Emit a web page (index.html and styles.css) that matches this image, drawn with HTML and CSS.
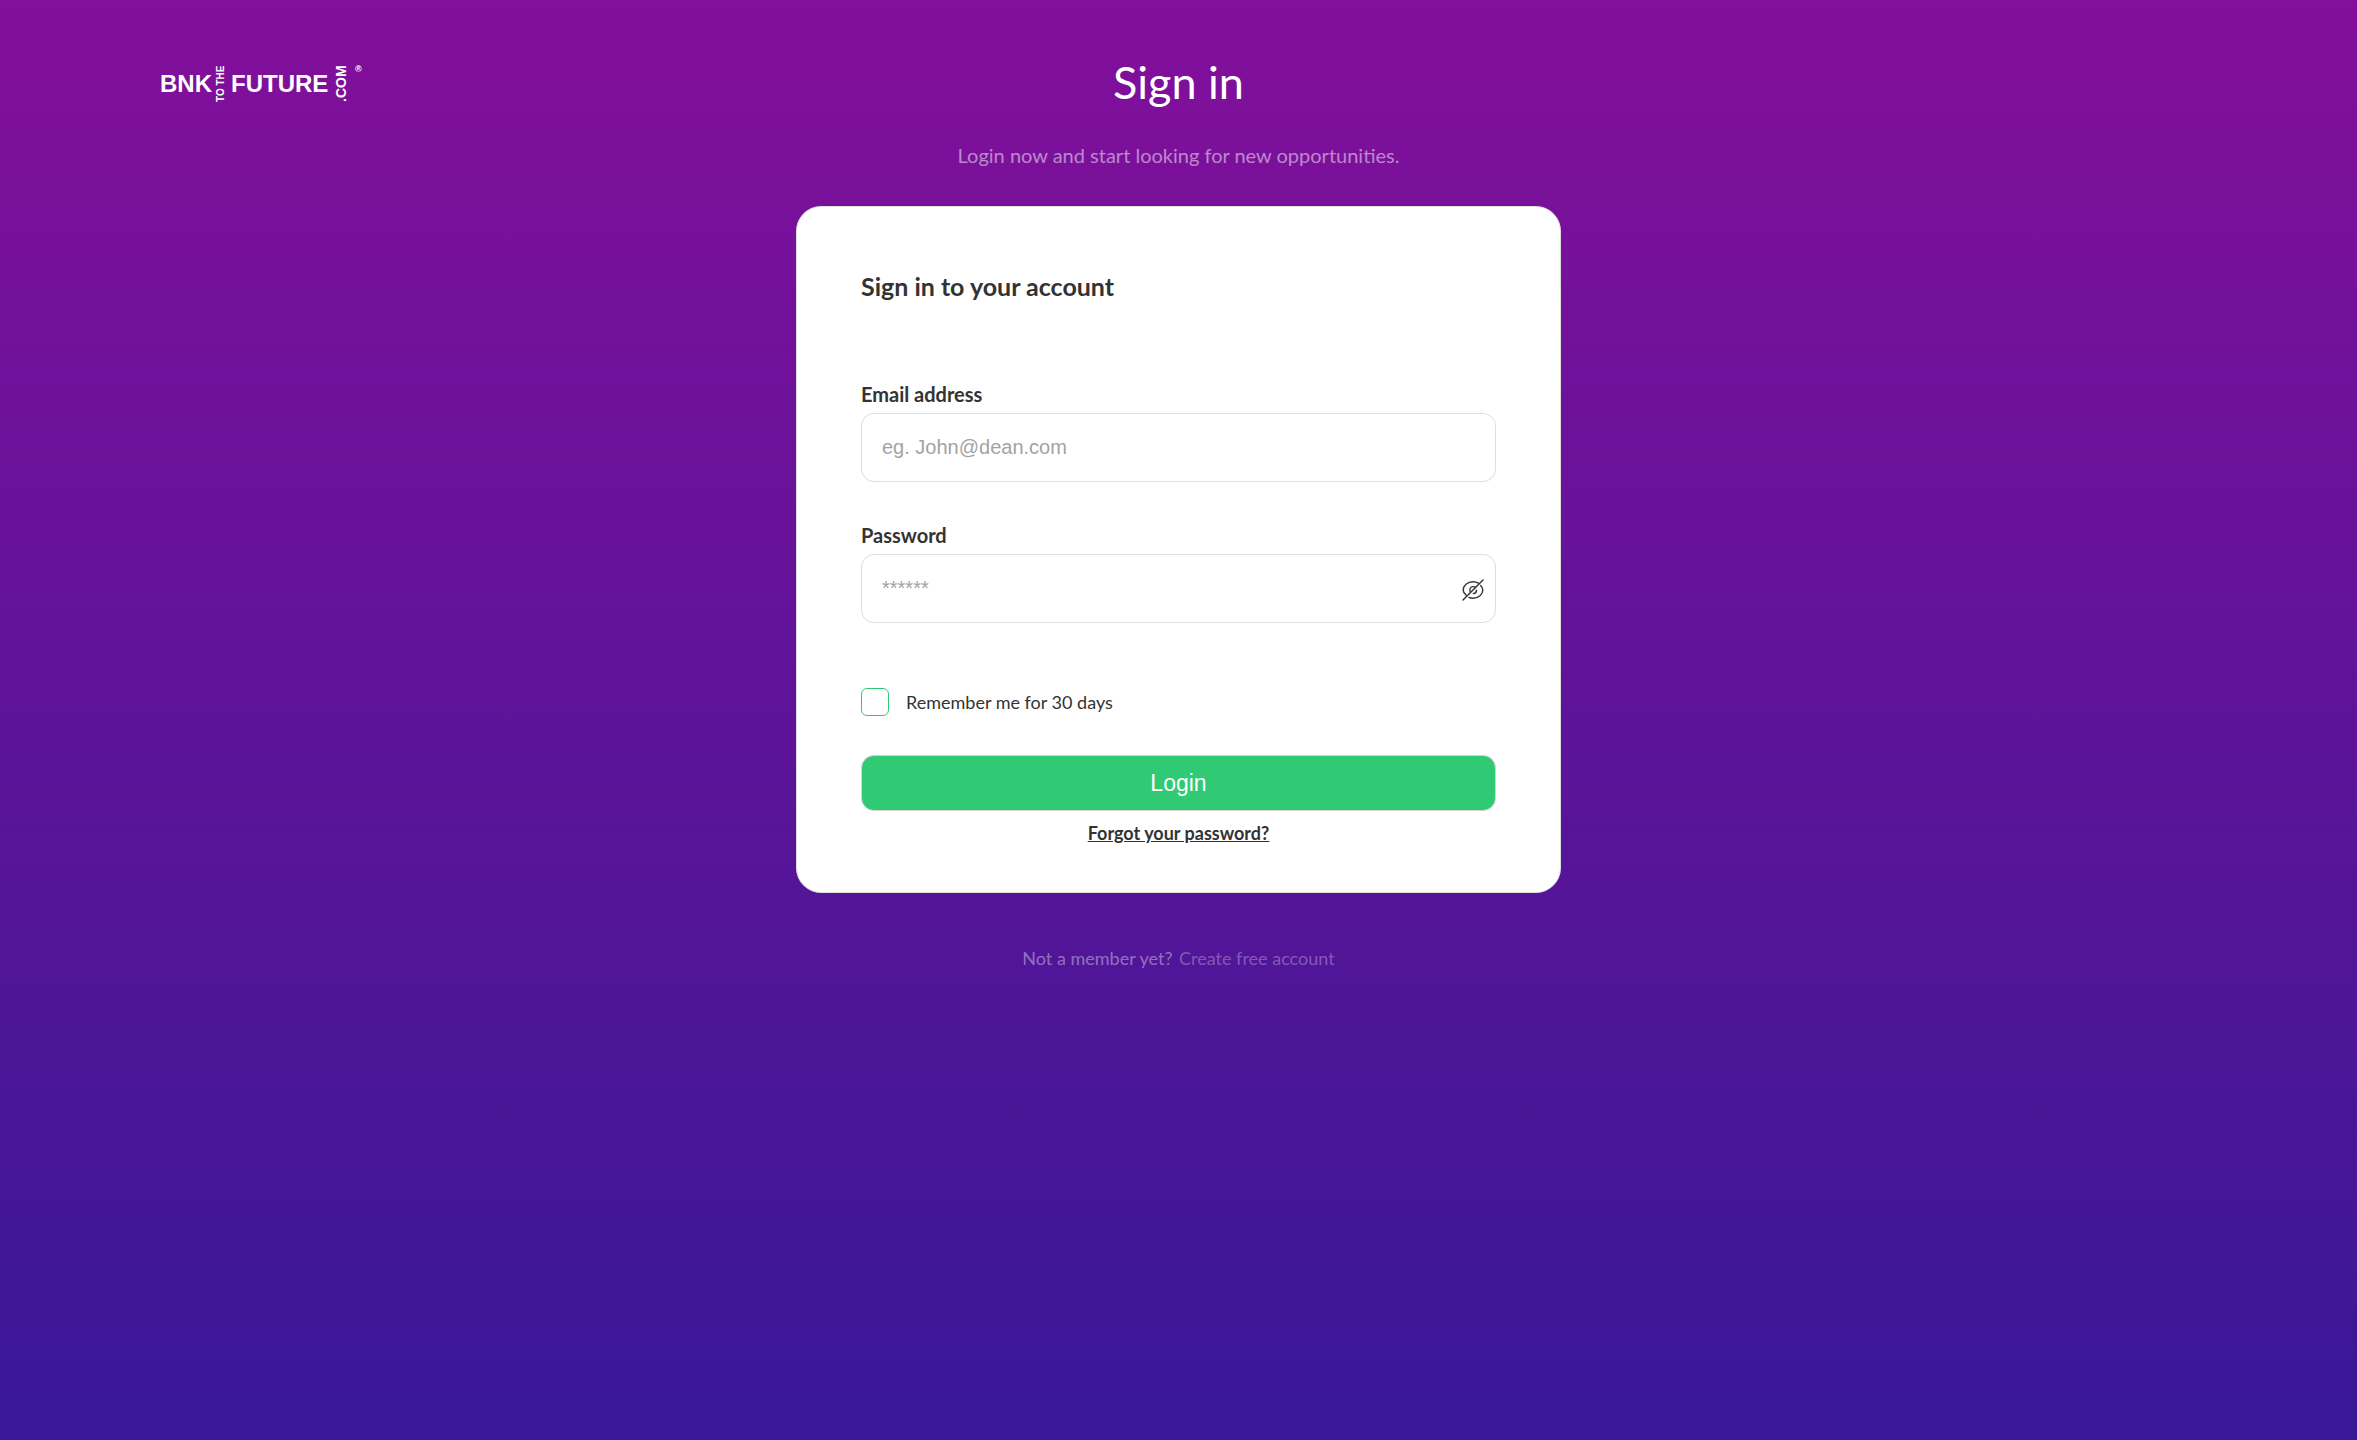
FILE: index.html
```html
<!DOCTYPE html>
<html lang="en">
<head>
<meta charset="utf-8">
<meta name="viewport" content="width=device-width, initial-scale=1">
<title>Sign in</title>
<link rel="stylesheet" href="styles.css">
</head>
<body>
<header class="header">
  <a class="logo" href="#" aria-label="BNK to the Future">
    <svg class="logo-art" viewBox="0 0 206 44" width="206" height="44">
      <text class="logo-main" x="0" y="31">BNK</text>
      <text class="logo-side" transform="translate(64 41) rotate(-90)">TO THE</text>
      <text class="logo-main" x="71" y="31">FUTURE</text>
      <text class="logo-com" transform="translate(186 41) rotate(-90)">.COM</text>
      <text class="logo-mark" x="195" y="11">®</text>
    </svg>
  </a>
  <div class="intro">
    <h1 class="title">Sign in</h1>
    <p class="subtitle">Login now and start looking for new opportunities.</p>
  </div>
</header>
<main class="main">
  <form class="card">
    <h2 class="card-title">Sign in to your account</h2>
    <div class="field">
      <label class="label" for="email">Email address</label>
      <input class="input" id="email" type="email" placeholder="eg. John@dean.com">
    </div>
    <div class="field">
      <label class="label" for="password">Password</label>
      <div class="password">
        <input class="input input-password" id="password" type="password" placeholder="******">
        <button class="toggle" type="button" aria-label="Show password">
          <svg viewBox="0 0 22 22" width="22" height="22" fill="none" stroke="#333" stroke-width="1.4" stroke-linecap="round">
            <path d="M1 21 21 1"/>
            <path d="M4.2 16.3C2.300 14.8 1.200 12.800 1.200 11c0-4.200 4.200-8.200 9.800-8.200 2 0 3.900.5 5.400 1.400"/>
            <path d="M18.600 6.500C20 7.800 20.800 9.500 20.800 11c0 4.200-4.200 8.200-9.800 8.200-1.500 0-2.900-.3-4.100-.8"/>
            <path d="M8.300 13.300C7 10.700 8.300 7.600 11 7.600c1 0 1.800.3 2.400.8"/>
            <path d="M14.500 11.200c0 1.900-1.300 3.200-3.100 3.300"/>
          </svg>
        </button>
      </div>
    </div>
    <label class="remember"><input class="check" type="checkbox">Remember me for 30 days</label>
    <button class="login" type="submit">Login</button>
    <a class="forgot" href="#">Forgot your password?</a>
  </form>
  <p class="join">Not a member yet? <a class="join-link" href="#">Create free account</a></p>
</main>
</body>
</html>
```
FILE: styles.css
```css
* { box-sizing: border-box; }
body {
  margin: 0;
  min-height: 100vh;
  background: linear-gradient(#830f9b, #381897);
  color: #333;
  font-family: Lato, sans-serif;
  font-size: 18px;
  line-height: 24px;
}
h1, h2, p { margin: 0; }
.header {
  display: grid;
  grid-template-columns: 1fr auto 1fr;
  padding: 55px 160px 39px;
}
.logo { padding-top: 6px; }
.logo-art { display: block; fill: #fff; font-family: "Liberation Sans", Arial, sans-serif; font-weight: 700; }
.logo-main { font-size: 24px; }
.logo-side { font-size: 10px; }
.logo-com { font-size: 14px; }
.logo-mark { font-size: 9px; }
.intro { text-align: center; color: #fff; }
.title { font-size: 45px; font-weight: 400; line-height: 54px; }
.subtitle { margin-top: 34px; font-size: 20px; color: rgba(255, 255, 255, .5); }
.main { display: flex; flex-direction: column; align-items: center; padding: 0 20px 40px; }
.card {
  display: flex;
  flex-direction: column;
  width: 100%;
  max-width: 765px;
  padding: 63px 64px 47px;
  border: 1px solid #ddd;
  border-radius: 25px;
  background: #fff;
}
.card-title { margin-bottom: 79px; font-size: 25px; font-weight: 700; line-height: 32px; }
.field { margin-bottom: 40px; }
.label { display: block; margin-bottom: 6px; font-size: 20px; font-weight: 700; line-height: 26px; }
.input {
  display: block;
  width: 100%;
  height: 69px;
  padding: 0 20px;
  border: 1px solid #ddd;
  border-radius: 13px;
  background: #fff;
  font: 20px "Liberation Sans", Arial, sans-serif;
}
.input::placeholder { color: #a3a3a3; opacity: 1; }
.password { position: relative; }
.input-password { padding-right: 56px; }
.toggle {
  position: absolute;
  top: 25px;
  right: 12px;
  padding: 0;
  border: 0;
  background: none;
}
.toggle svg { display: block; }
.remember { display: flex; align-items: center; gap: 17px; margin-top: 25px; }
.check {
  appearance: none;
  width: 28px;
  height: 28px;
  margin: 0;
  border: 1px solid #2fcb74;
  border-radius: 6px;
  background: #fff;
}
.login {
  height: 56px;
  margin-top: 39px;
  border: 1px solid #d4d4d4;
  border-radius: 13px;
  background: #30ca74;
  color: #fff;
  font: 23px "Liberation Sans", Arial, sans-serif;
}
.forgot { align-self: center; margin-top: 10px; color: #333; font-weight: 700; }
.join { margin-top: 53px; color: rgba(255, 255, 255, .4); }
.join-link { margin-left: 2px; color: rgba(255, 255, 255, .3); text-decoration: none; }
```
